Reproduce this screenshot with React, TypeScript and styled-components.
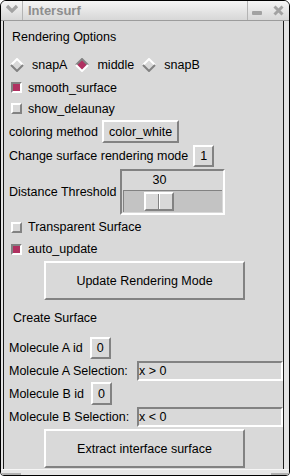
import styled, { createGlobalStyle } from "styled-components";

const GlobalStyle = createGlobalStyle`
  html, body {
    margin: 0;
    padding: 0;
    background: #ffffff;
  }
  #root {
    width: 290px;
    height: 476px;
  }
`;

const LIGHT = "#ffffff";
const DARK = "#828282";
const BG = "#d9d9d9";
const SELECT = "#b03060";

const Window = styled.div`
  box-sizing: border-box;
  width: 290px;
  height: 476px;
  border: 1px solid #000;
  border-radius: 6px 6px 4px 4px;
  background: #e4e4e4;
  display: flex;
  flex-direction: column;
  overflow: hidden;
  font-family: "Liberation Sans", Arial, sans-serif;
`;

const TitleBar = styled.div`
  height: 19px;
  flex: none;
  display: flex;
  align-items: stretch;
  background: linear-gradient(#f5f5f5, #d7d7d7);
  border-bottom: 1px solid #9c9c9c;
`;

const TitleButton = styled.div<{ $w: number; $side: "left" | "right" | "none" }>`
  width: ${(p) => p.$w}px;
  flex: none;
  display: flex;
  align-items: center;
  justify-content: flex-start;
  border-right: ${(p) => (p.$side === "right" ? "1px solid #b4b4b4" : "none")};
  border-left: ${(p) => (p.$side === "left" ? "1px solid #b4b4b4" : "none")};
`;

const TitleText = styled.div`
  flex: 1;
  padding-left: 5px;
  font-size: 13px;
  font-weight: bold;
  color: #8e8e8e;
  line-height: 19px;
`;

const Frame = styled.div`
  flex: 1;
  display: flex;
  min-height: 0;
`;

const Strip = styled.div<{ $w: number }>`
  width: ${(p) => p.$w}px;
  flex: none;
  background: #e4e4e4;
`;

const Content = styled.div`
  flex: 1;
  display: flex;
  flex-direction: column;
  background: ${BG};
  border-left: 1px solid #1c1c1c;
  border-right: 1px solid #1c1c1c;
  font-size: 12.5px;
  color: #000;
`;

const BottomFrame = styled.div`
  height: 6px;
  flex: none;
  display: flex;
  justify-content: space-between;
  align-items: flex-end;
  background: #e6e6e6;
  border-top: 1px solid #f6f6f6;
  box-sizing: border-box;
`;

const Handle = styled.div<{ $w: number }>`
  width: ${(p) => p.$w}px;
  height: 2px;
  background: #b0b0b0;
`;

const Row = styled.div<{ $h: number; $pl?: number }>`
  height: ${(p) => p.$h}px;
  flex: none;
  display: flex;
  align-items: center;
  padding-left: ${(p) => p.$pl ?? 5}px;
  white-space: nowrap;
`;

const RadioItem = styled.div`
  display: flex;
  align-items: center;
  margin-right: 8px;
`;

const Diamond = styled.svg`
  flex: none;
  margin-right: 8px;
`;

const CheckBox = styled.div<{ $on: boolean }>`
  box-sizing: border-box;
  width: 11px;
  height: 11px;
  flex: none;
  margin-right: 6px;
  border: 2px solid;
  border-color: ${(p) =>
    p.$on ? `${DARK} ${LIGHT} ${LIGHT} ${DARK}` : `${LIGHT} ${DARK} ${DARK} ${LIGHT}`};
  background: ${(p) => (p.$on ? SELECT : BG)};
`;

const TkButton = styled.button<{ $h: number; $w?: number; $ml?: number }>`
  box-sizing: border-box;
  height: ${(p) => p.$h}px;
  width: ${(p) => (p.$w ? `${p.$w}px` : "auto")};
  margin: 0 0 0 ${(p) => p.$ml ?? 4}px;
  padding: 0 5px;
  font: inherit;
  color: #000;
  background: ${BG};
  border: 2px solid;
  border-color: ${LIGHT} ${DARK} ${DARK} ${LIGHT};
  border-radius: 0;
  white-space: nowrap;
`;

const Scale = styled.div`
  box-sizing: border-box;
  width: 105px;
  height: 46px;
  margin-left: 4px;
  border: 2px solid;
  border-color: ${DARK} ${LIGHT} ${LIGHT} ${DARK};
  display: flex;
  flex-direction: column;
`;

const ScaleValue = styled.div`
  height: 19px;
  flex: none;
  display: flex;
  align-items: center;
`;

const ScaleNumber = styled.div`
  width: 30px;
  text-align: center;
  padding-bottom: 2px;
`;

const Trough = styled.div`
  flex: 1;
  margin: 0 1px 1px 1px;
  background: #c3c3c3;
  border-top: 1px solid ${DARK};
  border-left: 1px solid ${DARK};
  display: flex;
  align-items: center;
`;

const Slider = styled.div`
  box-sizing: border-box;
  width: 30px;
  height: 19px;
  flex: none;
  display: flex;
  border: 2px solid;
  border-color: ${LIGHT} ${DARK} ${DARK} ${LIGHT};
  background: ${BG};
`;

const SliderHalf = styled.div<{ $left: boolean }>`
  flex: 1;
  border-right: ${(p) => (p.$left ? `1px solid ${DARK}` : "none")};
  border-left: ${(p) => (p.$left ? "none" : `1px solid ${LIGHT}`)};
`;

const Entry = styled.input`
  box-sizing: border-box;
  width: 146px;
  height: 20px;
  margin: 0 0 0 auto;
  padding: 0;
  font: inherit;
  color: #000;
  background: ${BG};
  border: 2px solid;
  border-color: ${DARK} ${LIGHT} ${LIGHT} ${DARK};
  outline: none;
`;

const RadioMark = ({ on }: { on: boolean }) => (
  <Diamond width="14" height="14" viewBox="0 0 14 14">
    <polygon points="7,1 13,7 7,13 1,7" fill={on ? SELECT : BG} />
    <polyline
      points="1,7 7,1 13,7"
      fill="none"
      stroke={on ? DARK : LIGHT}
      strokeWidth="2"
    />
    <polyline
      points="1,7 7,13 13,7"
      fill="none"
      stroke={on ? LIGHT : DARK}
      strokeWidth="2"
    />
  </Diamond>
);

const Check = ({ on, label }: { on: boolean; label: string }) => (
  <Row $h={21} $pl={7}>
    <CheckBox $on={on} />
    {label}
  </Row>
);

const sliderOffset = 20;

export default function App() {
  return (
    <>
      <GlobalStyle />
      <Window>
        <TitleBar>
          <TitleButton $w={21} $side="right">
            <svg width="21" height="19" viewBox="0 0 21 19">
              <polyline
                points="6,5 11,10 16,5"
                fill="none"
                stroke="#a2a2a2"
                strokeWidth="3.2"
              />
            </svg>
          </TitleButton>
          <TitleText>Intersurf</TitleText>
          <TitleButton $w={21} $side="left">
            <svg width="21" height="19" viewBox="0 0 21 19">
              <rect x="4" y="10" width="10" height="4" rx="1" fill="#a2a2a2" />
            </svg>
          </TitleButton>
          <TitleButton $w={20} $side="none">
            <svg width="20" height="19" viewBox="0 0 20 19">
              <path
                d="M5.5 5.5 L13.5 13.5 M13.5 5.5 L5.5 13.5"
                stroke="#a2a2a2"
                strokeWidth="3"
              />
            </svg>
          </TitleButton>
        </TitleBar>
        <Frame>
          <Strip $w={2} />
          <Content>
            <Row $h={31} $pl={8}>
              Rendering Options
            </Row>
            <Row $h={25} $pl={6}>
              <RadioItem>
                <RadioMark on={false} />
                snapA
              </RadioItem>
              <RadioItem>
                <RadioMark on={true} />
                middle
              </RadioItem>
              <RadioItem>
                <RadioMark on={false} />
                snapB
              </RadioItem>
            </Row>
            <Check on={true} label="smooth_surface" />
            <Check on={false} label="show_delaunay" />
            <Row $h={25}>
              coloring method
              <TkButton $h={23}>color_white</TkButton>
            </Row>
            <Row $h={24}>
              Change surface rendering mode
              <TkButton $h={22} $ml={5}>
                1
              </TkButton>
            </Row>
            <Row $h={48}>
              Distance Threshold
              <Scale>
                <ScaleValue>
                  <ScaleNumber style={{ marginLeft: sliderOffset + 2 }}>30</ScaleNumber>
                </ScaleValue>
                <Trough>
                  <Slider style={{ marginLeft: sliderOffset }}>
                    <SliderHalf $left={true} />
                    <SliderHalf $left={false} />
                  </Slider>
                </Trough>
              </Scale>
            </Row>
            <Row $h={22} $pl={7}>
              <CheckBox $on={false} />
              Transparent Surface
            </Row>
            <Row $h={22} $pl={7}>
              <CheckBox $on={true} />
              auto_update
            </Row>
            <Row $h={41} $pl={40}>
              <TkButton $h={39} $w={201} $ml={0}>
                Update Rendering Mode
              </TkButton>
            </Row>
            <Row $h={34} $pl={9}>
              Create Surface
            </Row>
            <Row $h={25}>
              Molecule A id
              <TkButton $h={22} $ml={7}>
                0
              </TkButton>
            </Row>
            <Row $h={21}>
              Molecule A Selection:
              <Entry readOnly value="x > 0" />
            </Row>
            <Row $h={25}>
              Molecule B id
              <TkButton $h={23} $ml={7}>
                0
              </TkButton>
            </Row>
            <Row $h={22}>
              Molecule B Selection:
              <Entry readOnly value="x < 0" />
            </Row>
            <Row $h={41} $pl={40}>
              <TkButton $h={39} $w={201} $ml={0}>
                Extract interface surface
              </TkButton>
            </Row>
          </Content>
          <Strip $w={5} />
        </Frame>
        <BottomFrame>
          <Handle $w={20} />
          <Handle $w={18} />
        </BottomFrame>
      </Window>
    </>
  );
}
